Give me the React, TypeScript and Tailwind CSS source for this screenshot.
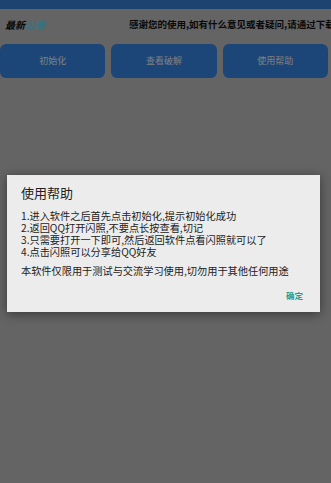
const font = { fontFamily: '"Noto Sans CJK SC", "Noto Sans", sans-serif' }

const BUTTONS = ['初始化', '查看破解', '使用帮助']

const STEPS = [
  '1.进入软件之后首先点击初始化,提示初始化成功',
  '2.返回QQ打开闪照,不要点长按查看,切记',
  '3.只需要打开一下即可,然后返回软件点看闪照就可以了',
  '4.点击闪照可以分享给QQ好友',
]

function HelpDialog() {
  return (
    <div className="absolute inset-0 bg-black/50">
      <div className="mx-[7px] mt-[175px] w-[313px] bg-[#ececec] pl-[14px] pr-[15px] pt-[10px] pb-[11px] shadow-[0_2px_10px_rgba(0,0,0,0.45)]">
        <h2 className="text-[13px] leading-[16px] text-[#222]">使用帮助</h2>
        <div className="mt-[9px] text-[10.2px] leading-[12px] text-[#222]">
          {STEPS.map((s) => (
            <p key={s} className="whitespace-nowrap">{s}</p>
          ))}
        </div>
        <p className="mt-[7px] whitespace-nowrap text-[10.2px] leading-[12px] text-[#222]">
          本软件仅限用于测试与交流学习使用,切勿用于其他任何用途
        </p>
        <div className="mt-[12px] flex justify-end pr-[2px]">
          <button className="text-[8.5px] leading-[12px] font-bold text-[#1e9d8e]">确定</button>
        </div>
      </div>
    </div>
  )
}

export default function App() {
  return (
    <div className="relative h-[483px] w-[331px] overflow-hidden bg-[#c8c8c8]" style={font}>
      <div className="h-[9px] bg-[#3a86e0]" />
      <div className="flex h-[30px] items-center">
        <div className="w-[129px] shrink-0 pl-[5px] text-[10px] font-bold italic">
          <span className="text-[#111]">最新</span>
          <span className="text-[#70e4ff]">公告</span>
        </div>
        <div className="overflow-hidden whitespace-nowrap text-[9.5px] font-bold text-[#111]">
          感谢您的使用,如有什么意见或者疑问,请通过下载渠道联系我们
        </div>
      </div>
      <div className="mt-[5px] flex gap-[6px] pr-[3px]">
        {BUTTONS.map((b) => (
          <button
            key={b}
            className="flex h-[34px] flex-1 items-center justify-center rounded-[6px] bg-[#388af0] text-[9px] text-white"
          >
            {b}
          </button>
        ))}
      </div>
      <HelpDialog />
    </div>
  )
}
